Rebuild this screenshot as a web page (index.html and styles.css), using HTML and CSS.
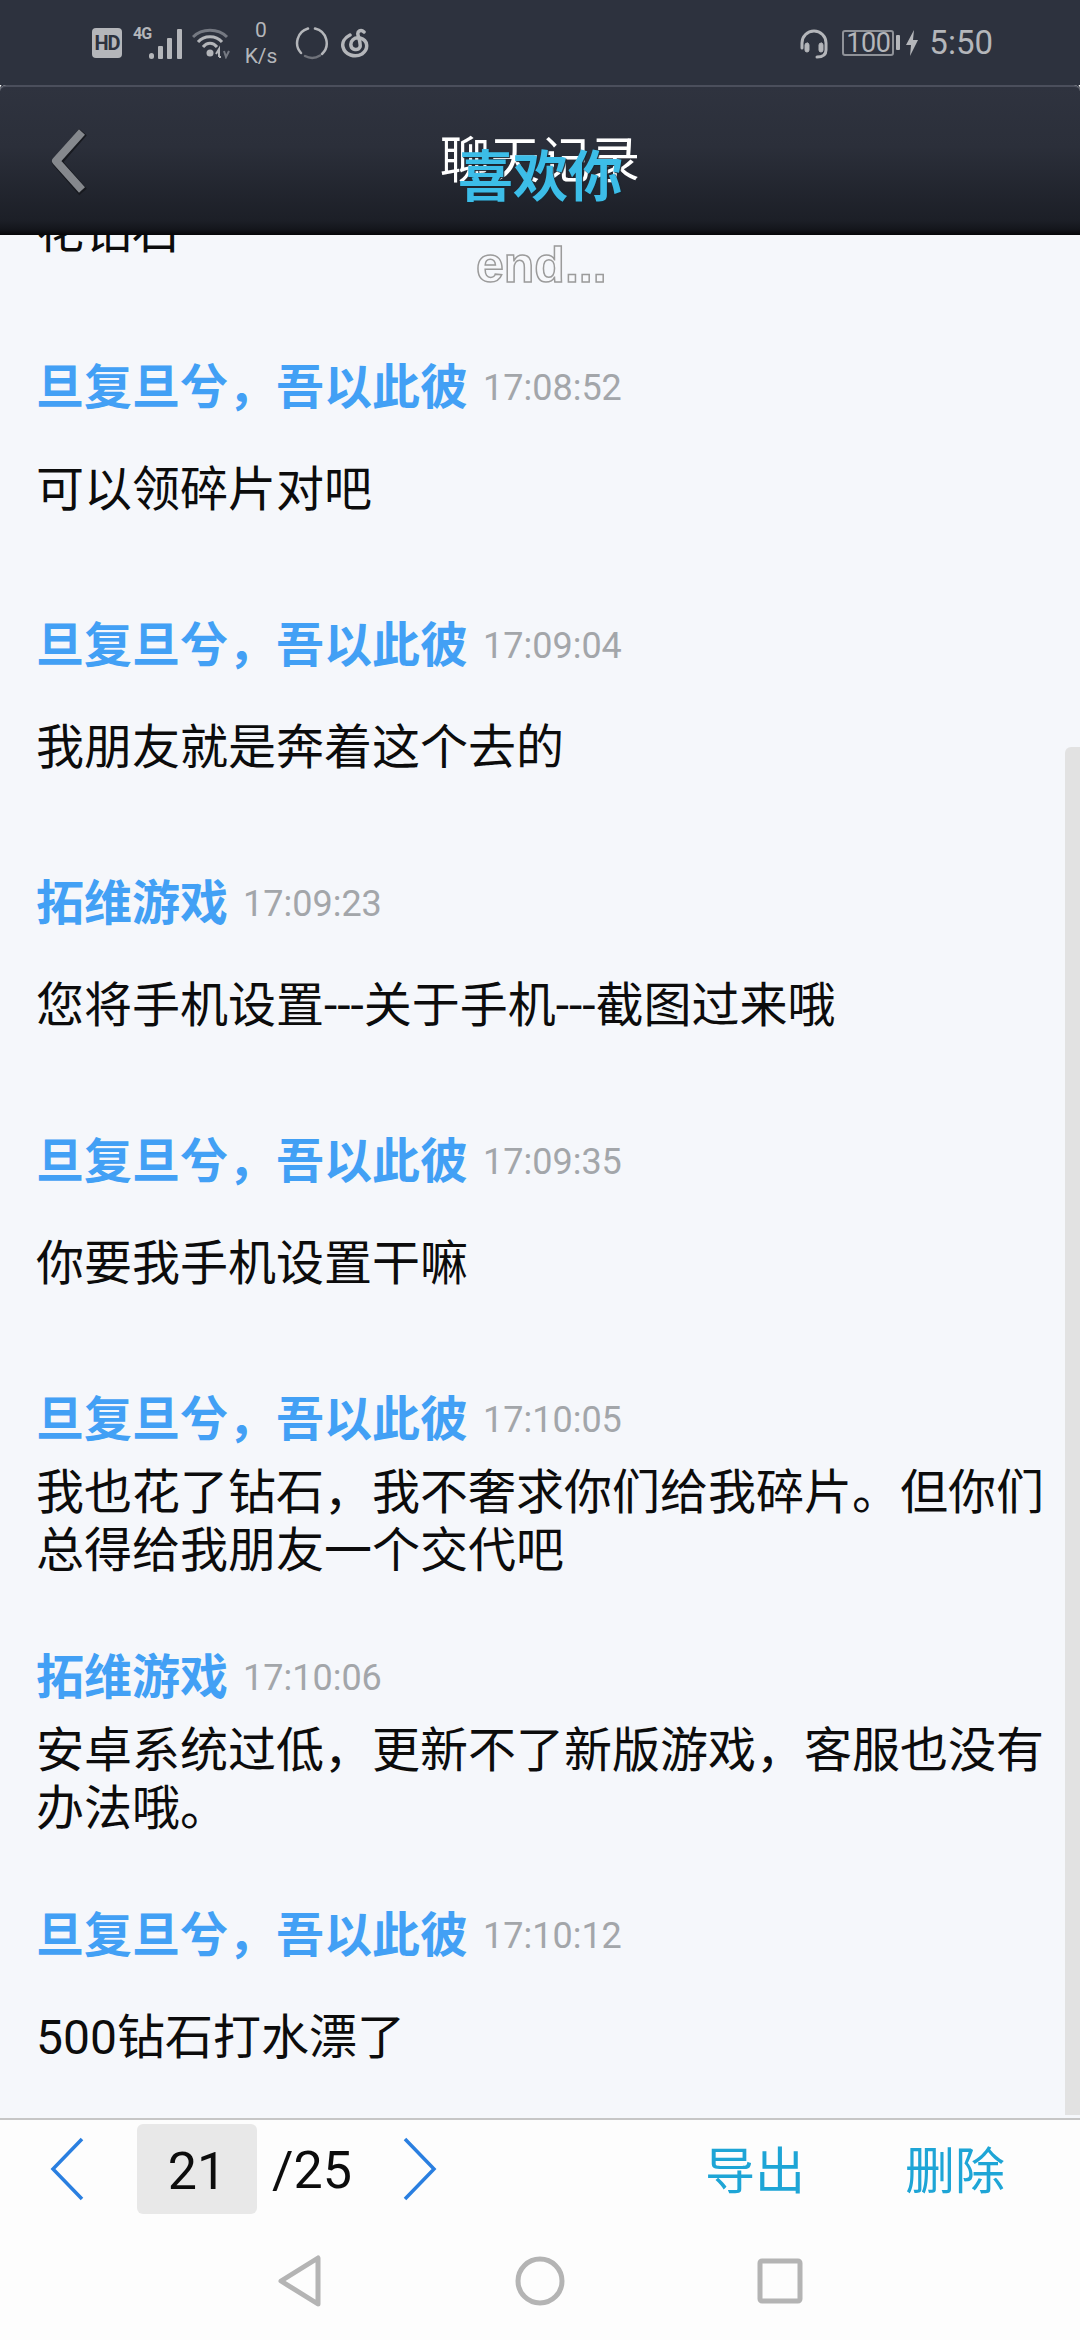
FILE: index.html
```html
<!DOCTYPE html>
<html lang="zh-CN">
<head>
    <meta charset="UTF-8">
    <meta name="viewport" content="width=device-width, initial-scale=1.0">
    <title>聊天记录</title>
    <link rel="stylesheet" href="styles.css">
</head>
<body>
    <div class="status-bar">
        <div class="status-left">
            <span class="hd-badge">HD</span>
            <div class="signal">
                <span class="net-type">4G</span>
                <svg class="signal-bars" width="33" height="30" viewBox="0 0 33 30">
                    <rect x="0" y="24" width="5" height="6" rx="2.5"/>
                    <rect x="9" y="17" width="5" height="13" rx="1"/>
                    <rect x="18" y="9" width="5" height="21" rx="1"/>
                    <rect x="28" y="0" width="5" height="30" rx="1"/>
                </svg>
            </div>
            <svg class="wifi" width="38" height="32" viewBox="0 0 38 32" fill="none">
                <path d="M1 10 C10 1 26 1 35 10" stroke="#757982" stroke-width="3"/>
                <path d="M6 15 C12 8 24 8 30 15" stroke="#b4b6ba" stroke-width="3"/>
                <path d="M11 20 C15 15 21 15 25 20" stroke="#b4b6ba" stroke-width="3"/>
                <circle cx="18" cy="26" r="3.5" fill="#b4b6ba"/>
                <path d="M27 30 L27 22 L24 27 M27 30 h2" stroke="#b4b6ba" stroke-width="2"/>
                <path d="M32 24 L34 30 L37 24" stroke="#757982" stroke-width="2"/>
            </svg>
            <div class="speed">
                <span>0</span>
                <span>K/s</span>
            </div>
            <svg class="spinner" width="34" height="34" viewBox="0 0 34 34" fill="none" stroke-width="2.5" stroke-linecap="round">
                <path d="M20 2.5 A15 15 0 0 1 27 28" stroke="#b4b6ba"/>
                <path d="M25 29.5 A15 15 0 0 1 10 30" stroke="#6f727a"/>
                <path d="M6 27 A15 15 0 0 1 13 2.5" stroke="#b4b6ba"/>
            </svg>
            <svg class="music" width="28" height="30" viewBox="0 0 28 30" fill="none" stroke="#b4b6ba" stroke-width="3.5" stroke-linecap="round">
                <path d="M9 7 C3 10 1 15 2 19 C4 27 14 30 21 26 C28 21 27 12 19 10 C13 9 9 13 10 18 C11 22 17 23 19 19 C20 16 18 11 17 7 C16 3 20 1 23 4"/>
            </svg>
        </div>
        <div class="status-right">
            <svg class="headset" width="30" height="31" viewBox="0 0 30 31" fill="none" stroke="#b4b6ba" stroke-linecap="round">
                <path d="M3 20 V15 A12 12 0 0 1 27 15 V22 C27 27 23 29 18 29" stroke-width="3"/>
                <rect x="6" y="15" width="4" height="9" rx="2" fill="#b4b6ba" stroke-width="1"/>
                <rect x="20" y="15" width="4" height="9" rx="2" fill="#b4b6ba" stroke-width="1"/>
            </svg>
            <div class="battery">
                <span class="battery-body">100</span>
                <span class="battery-tip"></span>
            </div>
            <svg class="bolt" width="12" height="26" viewBox="0 0 12 26">
                <path d="M8 0 L0 15 H5 L4 26 L12 10 H7 Z" fill="#b4b6ba"/>
            </svg>
            <span class="clock">5:50</span>
        </div>
    </div>

    <header class="title-bar">
        <svg class="back" width="42" height="68" viewBox="0 0 42 68" fill="none">
            <path d="M33 4 L7 34 L33 64" stroke="#17191f" stroke-width="10" stroke-linejoin="round"/>
            <path d="M32 4 L6 33 L32 62" stroke="#85888d" stroke-width="8" stroke-linejoin="round"/>
        </svg>
        <h1>聊天记录</h1>
        <div class="overlay-like">喜欢你</div>
    </header>

    <main class="chat-log">
        <div class="msg">
            <div class="msg-head"><span class="name">旦复旦兮，吾以此彼</span><span class="time">17:08:40</span></div>
            <div class="msg-body">花钻石</div>
        </div>
        <div class="msg">
            <div class="msg-head"><span class="name">旦复旦兮，吾以此彼</span><span class="time">17:08:52</span></div>
            <div class="msg-body">可以领碎片对吧</div>
        </div>
        <div class="msg">
            <div class="msg-head"><span class="name">旦复旦兮，吾以此彼</span><span class="time">17:09:04</span></div>
            <div class="msg-body">我朋友就是奔着这个去的</div>
        </div>
        <div class="msg">
            <div class="msg-head"><span class="name">拓维游戏</span><span class="time">17:09:23</span></div>
            <div class="msg-body">您将手机设置---关于手机---截图过来哦</div>
        </div>
        <div class="msg">
            <div class="msg-head"><span class="name">旦复旦兮，吾以此彼</span><span class="time">17:09:35</span></div>
            <div class="msg-body">你要我手机设置干嘛</div>
        </div>
        <div class="msg">
            <div class="msg-head"><span class="name">旦复旦兮，吾以此彼</span><span class="time">17:10:05</span></div>
            <div class="msg-body">我也花了钻石，我不奢求你们给我碎片。但你们总得给我朋友一个交代吧</div>
        </div>
        <div class="msg">
            <div class="msg-head"><span class="name">拓维游戏</span><span class="time">17:10:06</span></div>
            <div class="msg-body">安卓系统过低，更新不了新版游戏，客服也没有办法哦。</div>
        </div>
        <div class="msg">
            <div class="msg-head"><span class="name">旦复旦兮，吾以此彼</span><span class="time">17:10:12</span></div>
            <div class="msg-body">500钻石打水漂了</div>
        </div>
        <div class="end-mark">end...</div>
        <div class="scroll-thumb"></div>
    </main>

    <footer class="pager">
        <svg class="page-arrow" width="36" height="64" viewBox="0 0 36 64" fill="none">
            <path d="M32 2 L3 32 L32 62" stroke="#2a7fe0" stroke-width="3.5"/>
        </svg>
        <div class="page-num">21</div>
        <span class="page-total">/25</span>
        <svg class="page-arrow next" width="36" height="64" viewBox="0 0 36 64" fill="none">
            <path d="M4 2 L33 32 L4 62" stroke="#2a7fe0" stroke-width="3.5"/>
        </svg>
        <a class="pager-action export">导出</a>
        <a class="pager-action">删除</a>
    </footer>

    <nav class="nav-bar">
        <svg width="44" height="52" viewBox="0 0 44 52" fill="none" stroke="#b4b4b4" stroke-width="5" stroke-linejoin="round">
            <path d="M40 3 V49 L3 26 Z"/>
        </svg>
        <svg width="50" height="50" viewBox="0 0 50 50" fill="none" stroke="#b4b4b4" stroke-width="5">
            <circle cx="25" cy="25" r="22"/>
        </svg>
        <svg width="46" height="46" viewBox="0 0 46 46" fill="none" stroke="#b4b4b4" stroke-width="5" stroke-linejoin="round">
            <rect x="3" y="3" width="40" height="40" rx="2"/>
        </svg>
    </nav>
</body>
</html>
```

FILE: styles.css
```css
* {
    box-sizing: border-box;
}

body {
    font-family: Roboto, 'Noto Sans CJK SC', sans-serif;
    margin: 0;
    width: 1080px;
    height: 2340px;
    overflow: hidden;
    display: flex;
    flex-direction: column;
    background-color: #fdfdfd;
}

/* status bar */
.status-bar {
    height: 85px;
    flex: none;
    background-color: #2d323e;
    color: #b4b6ba;
    display: flex;
    justify-content: space-between;
    align-items: center;
    padding: 0 87px 0 92px;
}

.status-left,
.status-right {
    display: flex;
    align-items: center;
}

.hd-badge {
    width: 30px;
    height: 30px;
    margin-top: 1px;
    background-color: #b4b6ba;
    color: #2d323e;
    border-radius: 4px;
    font-size: 20px;
    font-weight: 700;
    letter-spacing: -1px;
    line-height: 30px;
    text-align: center;
}

.signal {
    display: flex;
    align-items: flex-end;
    margin-left: 11px;
    height: 32px;
}

.net-type {
    width: 16px;
    font-size: 16px;
    font-weight: 700;
    line-height: 14px;
    align-self: flex-start;
    letter-spacing: -1px;
}

.signal-bars {
    fill: #b4b6ba;
}

.wifi {
    margin-left: 10px;
}

.speed {
    display: flex;
    flex-direction: column;
    align-items: center;
    width: 36px;
    margin-left: 13px;
    font-size: 21px;
    line-height: 26px;
}

.spinner {
    margin-left: 16px;
}

.music {
    margin-left: 12px;
}

.headset {
    margin-top: 1px;
}

.battery {
    display: flex;
    align-items: center;
    margin-left: 13px;
}

.battery-body {
    width: 52px;
    height: 26px;
    border: 2px solid #8f9298;
    border-radius: 3px;
    font-size: 27px;
    line-height: 22px;
    text-align: center;
    letter-spacing: -0.5px;
}

.battery-tip {
    width: 4px;
    height: 15px;
    margin-left: 2px;
    background-color: #b4b6ba;
    border-radius: 1px;
}

.bolt {
    margin-left: 6px;
}

.clock {
    margin-left: 11px;
    font-size: 33px;
    line-height: 40px;
}

/* title bar */
.title-bar {
    position: relative;
    z-index: 2;
    height: 150px;
    flex: none;
    display: flex;
    align-items: center;
    justify-content: center;
    background: linear-gradient(#2f333f 0%, #2b2f3a 40%, #1c1f27 90%, #14161c 96%, #050508 100%);
    border-top: 2px solid #4b4f5c;
    border-radius: 6px 6px 0 0;
    box-shadow: 0 -2px 0 #2d323e;
}

.back {
    position: absolute;
    left: 50px;
    top: 41px;
}

.title-bar h1 {
    margin: 0;
    color: #ffffff;
    font-size: 50px;
    font-weight: 400;
    line-height: 60px;
}

.overlay-like {
    position: absolute;
    left: 458px;
    top: 58px;
    color: #3cbde8;
    font-size: 55px;
    font-weight: 700;
    line-height: 64px;
    text-shadow: 1px 1px 1px #1a2630;
}

/* chat list */
.chat-log {
    position: relative;
    height: 1883px;
    flex: none;
    overflow: hidden;
    display: flex;
    flex-direction: column;
    justify-content: flex-end;
    gap: 67px;
    padding: 0 30px 22px 36px;
    background-color: #f5f7fb;
}

.msg {
    flex: none;
    height: 191px;
    display: flex;
    flex-direction: column;
    gap: 15px;
}

.msg-head {
    height: 60px;
    display: flex;
    align-items: center;
    padding-bottom: 8px;
}

.name {
    color: #42a0f5;
    font-size: 48px;
    font-weight: 700;
}

.time {
    margin-left: 15px;
    margin-top: 10px;
    color: #a3a6aa;
    font-size: 36px;
}

.msg-body {
    height: 116px;
    display: flex;
    align-items: center;
    color: #0c0c0c;
    font-size: 48px;
    line-height: 58px;
}

.end-mark {
    position: absolute;
    left: 476px;
    top: 0;
    color: #f7f8fb;
    font-family: 'Liberation Sans', sans-serif;
    font-size: 50px;
    font-weight: 700;
    line-height: 60px;
    -webkit-text-stroke: 1.5px #9b9b9b;
}

.scroll-thumb {
    position: absolute;
    right: 0;
    top: 512px;
    bottom: 3px;
    width: 15px;
    background-color: #e2e2e2;
    border-radius: 6px 0 0 0;
}

/* pager */
.pager {
    height: 110px;
    flex: none;
    display: flex;
    align-items: center;
    padding: 4px 66px 14px 50px;
    background-color: #fdfdfd;
    border-top: 2px solid #c6c6c6;
}

.page-arrow {
    flex: none;
}

.page-num {
    width: 120px;
    height: 90px;
    margin-left: 51px;
    padding-top: 3px;
    background-color: #e8e8e8;
    border-radius: 6px;
    color: #0c0c0c;
    font-size: 52px;
    line-height: 90px;
    text-align: center;
}

.page-total {
    width: 129px;
    margin-left: 15px;
    padding-top: 3px;
    color: #0c0c0c;
    font-size: 52px;
}

.next {
    margin-right: 268px;
}

.pager-action {
    padding-top: 5px;
    color: #1ea5d6;
    font-size: 50px;
    line-height: 60px;
}

.export {
    margin-right: 100px;
}

/* system nav */
.nav-bar {
    flex: 1;
    display: flex;
    align-items: center;
    justify-content: space-between;
    padding: 0 277px 6px 278px;
    background-color: #fdfdfd;
}
```
